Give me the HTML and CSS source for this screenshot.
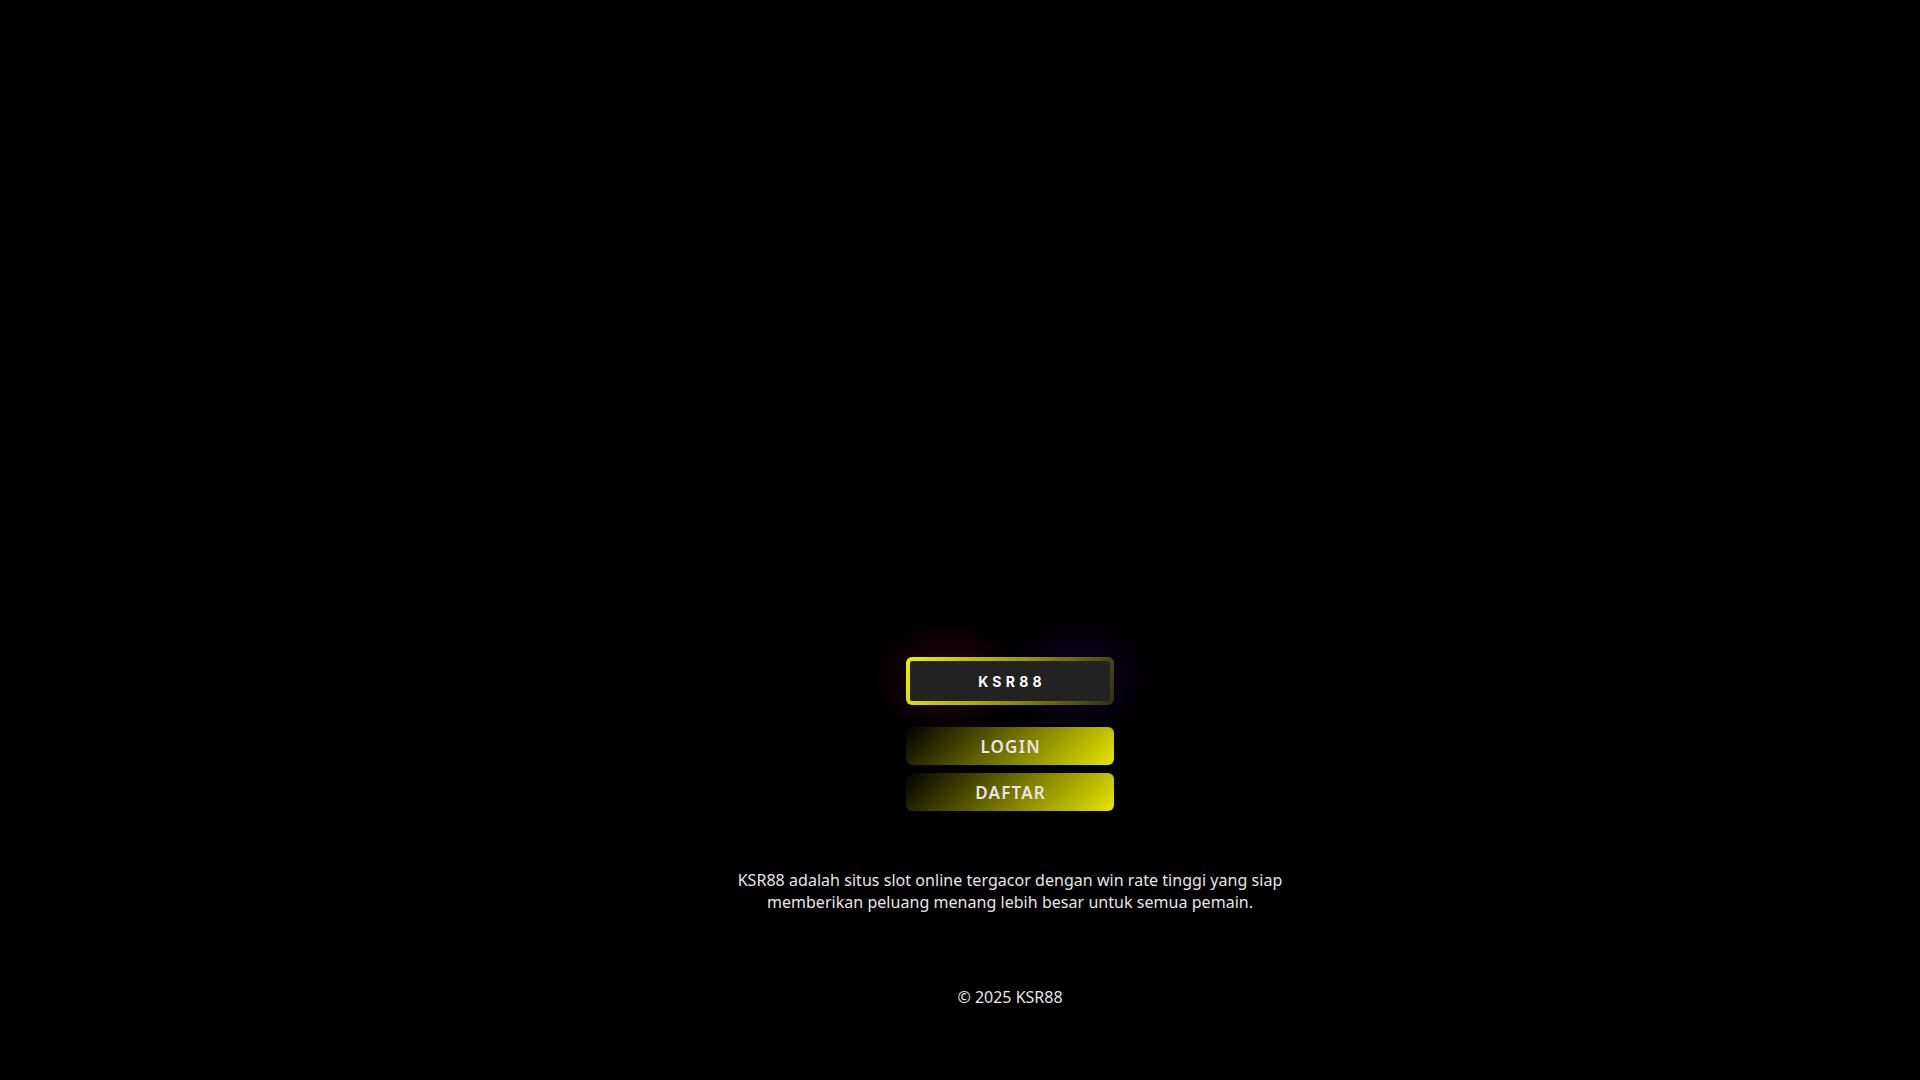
FILE: index.html
```html
<!DOCTYPE html>
<html lang="id">
<head>
<meta charset="utf-8">
<title>KSR88</title>
<link rel="stylesheet" href="styles.css">
</head>
<body>
<main class="page">
  <div class="brand">KSR88</div>
  <nav class="actions">
    <a class="btn" href="#">LOGIN</a>
    <a class="btn" href="#">DAFTAR</a>
  </nav>
  <p class="desc">KSR88 adalah situs slot online tergacor dengan win rate tinggi yang siap memberikan peluang menang lebih besar untuk semua pemain.</p>
  <footer class="foot">© 2025 KSR88</footer>
</main>
</body>
</html>
```

FILE: styles.css
```css
html {
  background: #000;
}
body {
  margin: 0;
  font-family: "Noto Sans", "Open Sans", sans-serif;
  color: #e6e6e6;
  min-height: 1080px;
}
.page {
  display: flex;
  flex-direction: column;
  align-items: center;
  padding: 657px 0 0 100px;
}
.brand {
  position: relative;
  box-sizing: border-box;
  width: 208px;
  height: 48px;
  border: 4px solid transparent;
  border-radius: 6px;
  background:
    linear-gradient(#222, #222) padding-box,
    linear-gradient(120deg, #f2f200 0%, #9a9a00 50%, #2e2e14 100%) border-box;
  display: flex;
  align-items: center;
  justify-content: center;
  font-family: Inter, "Roboto", sans-serif;
  font-weight: 700;
  font-size: 14px;
  letter-spacing: 4.2px;
  padding-left: 4px;
  color: #fff;
}
.brand::before {
  content: "";
  position: absolute;
  left: -60px;
  right: -60px;
  top: -50px;
  bottom: -50px;
  z-index: -1;
  background:
    radial-gradient(ellipse 75px 60px at 30% 48%, rgba(120, 0, 45, 0.34), transparent 100%),
    radial-gradient(ellipse 75px 60px at 71% 48%, rgba(45, 0, 120, 0.34), transparent 100%);
}
.actions {
  margin-top: 22px;
  display: flex;
  flex-direction: column;
  gap: 8px;
}
.btn {
  box-sizing: border-box;
  width: 208px;
  height: 38px;
  border-radius: 6px;
  background: linear-gradient(135deg, #000 0%, #e6e600 100%);
  display: flex;
  align-items: center;
  justify-content: center;
  color: #e6e6e6;
  text-decoration: none;
  font-weight: 600;
  font-size: 17px;
  letter-spacing: 1.2px;
  padding-left: 1.2px;
}
.desc {
  margin: 58px 0 0;
  max-width: 560px;
  text-align: center;
  font-size: 16px;
  line-height: 22px;
  letter-spacing: 0.04px;
  color: #e6e6e6;
}
.foot {
  margin-top: 73px;
  font-size: 16px;
  line-height: 22px;
  color: #e6e6e6;
}
```
